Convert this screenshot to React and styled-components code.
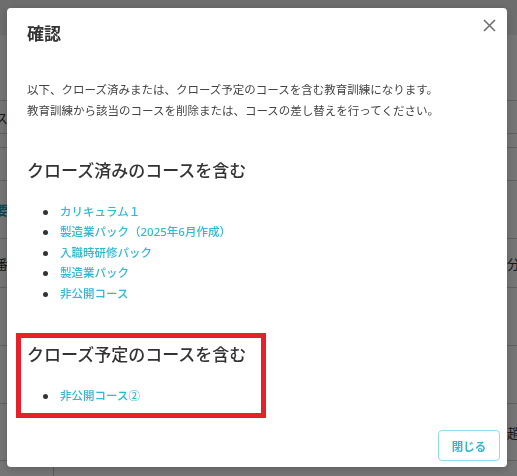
import React from 'react'
import styled, { createGlobalStyle } from 'styled-components'

const GlobalStyle = createGlobalStyle`
    html, body {
        margin: 0;
        padding: 0;
        width: 517px;
        height: 476px;
        overflow: hidden;
        font-family: "Noto Sans", "Noto Sans CJK JP", sans-serif;
        color: #333;
    }
    *, *::before, *::after {
        box-sizing: border-box;
    }
`

// ---- page behind the dialog ----

const Page = styled.div`
    width: 517px;
    height: 476px;
    background: #fff;
    display: flex;
    flex-direction: column;
`

const TopBar = styled.div`
    height: 35px;
    background: #eeeeee;
    flex-shrink: 0;
`

const Intro = styled.div`
    height: 65px;
    flex-shrink: 0;
`

const Row = styled.div`
    height: ${({ h }) => h}px;
    flex-shrink: 0;
    border-top: 1px solid #d2d2d2;
    display: grid;
    grid-template-columns: 8px 46px 1fr 10px;
    align-items: center;
    font-size: 13px;
`

const EdgeCell = styled.div`
    display: flex;
    justify-content: ${({ end }) => (end ? 'flex-end' : 'flex-start')};
    overflow: hidden;
    white-space: nowrap;
    color: ${({ link }) => (link ? '#1f9ab4' : '#333')};
    font-weight: ${({ link }) => (link ? 600 : 400)};
`

const MidCell = styled.div`
    align-self: stretch;
    border-right: ${({ line }) => (line ? '1px solid #c8c8c8' : 'none')};
`

// ---- dialog ----

const Overlay = styled.div`
    position: fixed;
    inset: 0;
    background: rgba(0, 0, 0, 0.54);
    padding: 8px 10px 9px 7px;
`

const Modal = styled.div`
    position: relative;
    width: 500px;
    height: 459px;
    background: #fff;
    border-radius: 4px;
    box-shadow: 0 2px 10px rgba(0, 0, 0, 0.2);
    display: flex;
    flex-direction: column;
`

const Header = styled.div`
    padding: 14px 20px 0;
`

const Title = styled.h2`
    margin: 0;
    font-size: 17px;
    line-height: 24px;
    font-weight: 700;
    color: #333;
`

const CloseButton = styled.button`
    position: absolute;
    top: 9px;
    right: 10px;
    width: 16px;
    height: 16px;
    padding: 0;
    border: none;
    background: none;
    cursor: pointer;
    display: flex;
    align-items: center;
    justify-content: center;
`

const Body = styled.div`
    flex: 1;
    padding: 33px 20px 0;
`

const Lead = styled.p`
    margin: 0;
    font-size: 11.5px;
    line-height: 21px;
    color: #444;
`

const Section = styled.section`
    position: relative;
    margin-top: ${({ gap }) => gap}px;

    ${({ highlighted }) =>
        highlighted &&
        `
        &::after {
            content: '';
            position: absolute;
            left: -11px;
            top: -10px;
            width: 250px;
            bottom: -12px;
            border: 5px solid #e8202a;
            pointer-events: none;
        }
    `}
`

const SectionTitle = styled.h3`
    margin: 0;
    font-size: 17px;
    line-height: 24px;
    font-weight: 500;
    color: #333;
`

const CourseList = styled.ul`
    list-style: none;
    margin: 18.5px 0 0;
    padding: 0 0 0 33px;
`

const CourseItem = styled.li`
    position: relative;
    font-size: 11.5px;
    line-height: 20.5px;
    font-weight: 500;

    &::before {
        content: '';
        position: absolute;
        left: -17px;
        top: 8px;
        width: 5px;
        height: 5px;
        border-radius: 50%;
        background: #333;
    }
`

const CourseLink = styled.a`
    color: #35b6d3;
    text-decoration: none;
`

const Footer = styled.div`
    display: flex;
    justify-content: flex-end;
    padding: 0 7px 6px;
`

const CloseAction = styled.button`
    width: 62px;
    height: 31px;
    border: 1px solid #8fdbe8;
    border-radius: 4px;
    background: #fff;
    color: #35b6d3;
    font-family: inherit;
    font-size: 11.5px;
    font-weight: 700;
    cursor: pointer;
`

const closedCourses = [
    'カリキュラム１',
    '製造業パック（2025年6月作成）',
    '入職時研修パック',
    '製造業パック',
    '非公開コース'
]

const closingCourses = ['非公開コース②']

const rows = [
    { h: 33, left: 'コース', right: '' },
    { h: 14, left: '', right: '' },
    { h: 33, left: '', right: '' },
    { h: 58, left: '主要', link: true, right: '' },
    { h: 49, left: '番', right: '分' },
    { h: 58, left: '', right: '' },
    { h: 58, left: '', right: '' },
    { h: 57, left: '', right: '趙' },
    { h: 16, left: '', right: '', line: true }
]

const App = () => {
    return (
        <>
            <GlobalStyle />
            <Page>
                <TopBar />
                <Intro />
                {rows.map((r, ind) => (
                    <Row key={ind} h={r.h}>
                        <EdgeCell end link={r.link}>{r.left}</EdgeCell>
                        <MidCell line={r.line} />
                        <div />
                        <EdgeCell>{r.right}</EdgeCell>
                    </Row>
                ))}
            </Page>

            <Overlay>
                <Modal role='dialog'>
                    <Header>
                        <Title>確認</Title>
                    </Header>
                    <CloseButton type='button' aria-label='close'>
                        <svg width='13' height='13' viewBox='0 0 13 13'>
                            <path d='M1 1 L12 12 M12 1 L1 12' stroke='#707070' strokeWidth='1.6' fill='none' />
                        </svg>
                    </CloseButton>
                    <Body>
                        <Lead>
                            以下、クローズ済みまたは、クローズ予定のコースを含む教育訓練になります。
                            <br />
                            教育訓練から該当のコースを削除または、コースの差し替えを行ってください。
                        </Lead>

                        <Section gap={38}>
                            <SectionTitle>クローズ済みのコースを含む</SectionTitle>
                            <CourseList>
                                {closedCourses.map(c => (
                                    <CourseItem key={c}>
                                        <CourseLink href='#'>{c}</CourseLink>
                                    </CourseItem>
                                ))}
                            </CourseList>
                        </Section>

                        <Section gap={39} highlighted>
                            <SectionTitle>クローズ予定のコースを含む</SectionTitle>
                            <CourseList>
                                {closingCourses.map(c => (
                                    <CourseItem key={c}>
                                        <CourseLink href='#'>{c}</CourseLink>
                                    </CourseItem>
                                ))}
                            </CourseList>
                        </Section>
                    </Body>
                    <Footer>
                        <CloseAction type='button'>閉じる</CloseAction>
                    </Footer>
                </Modal>
            </Overlay>
        </>
    )
}

export default App
